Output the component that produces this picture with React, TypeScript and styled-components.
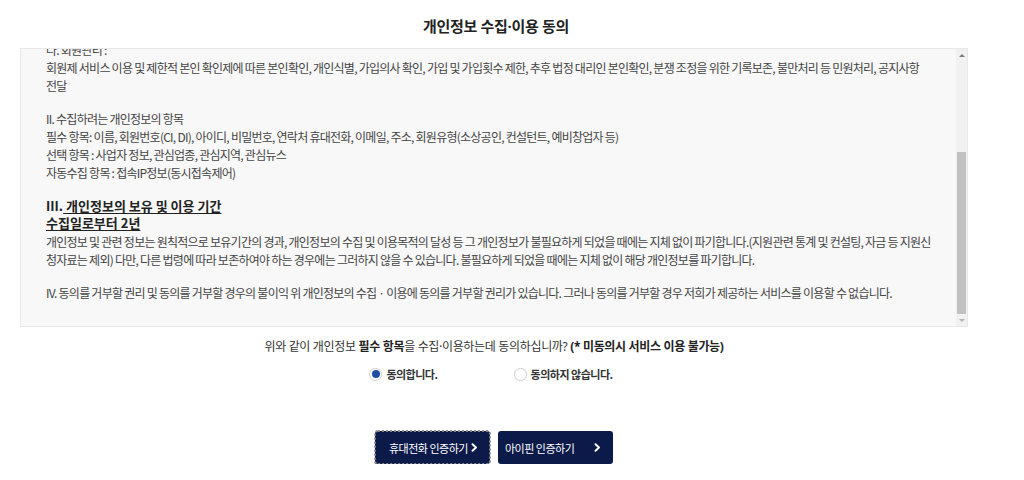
import React, { useLayoutEffect, useRef, useState } from 'react';
import styled, { createGlobalStyle } from 'styled-components';

const GlobalStyle = createGlobalStyle`
  html, body {
    margin: 0;
    padding: 0;
    background: #fff;
  }
  body {
    font-family: "Noto Sans CJK KR", "Noto Sans", sans-serif;
    color: #333;
  }
`;

const Page = styled.div`
  width: 948px;
  margin-left: 20px;
  padding-top: 16px;
`;

const Title = styled.h2`
  margin: 0 0 12px;
  padding-left: 4px;
  text-align: center;
  font-family: "Noto Sans", "Noto Sans CJK KR", sans-serif;
  font-size: 15px;
  line-height: 20px;
  font-weight: 700;
  letter-spacing: -0.3px;
  color: #222;
`;

const TermsBox = styled.div`
  display: flex;
  height: 277px;
  background: #f8f8f8;
  border: 1px solid #e8e8e8;
`;

const TermsScroll = styled.div`
  flex: 1;
  overflow-y: scroll;
  scrollbar-width: none;

  &::-webkit-scrollbar {
    display: none;
  }
`;

const ScrollBar = styled.div`
  width: 11px;
  display: flex;
  flex-direction: column;
  background: #f1f1f1;
`;

const ScrollArrow = styled.div<{ $up?: boolean }>`
  height: 12px;
  display: flex;
  align-items: center;
  justify-content: center;

  &::before {
    content: '';
    width: 0;
    height: 0;
    border-left: 3px solid transparent;
    border-right: 3px solid transparent;
    ${(p) =>
      p.$up
        ? 'border-bottom: 3px solid #7a7a7a;'
        : 'border-top: 3px solid #b4b4b4;'}
  }
`;

const ScrollTrack = styled.div`
  flex: 1;
  position: relative;
`;

const ScrollThumb = styled.div`
  position: absolute;
  left: 1px;
  right: 1px;
  background: #c1c1c1;
`;

const TermsBody = styled.div`
  padding: 28px 25px 24px 25px;
  font-size: 12px;
  line-height: 18px;
  letter-spacing: -0.75px;
  color: #444;
  word-break: break-all;
`;

const Para = styled.p`
  margin: 0 0 15px;

  &:last-child {
    margin-bottom: 0;
  }
`;

const Heading = styled.div`
  font-size: 13px;
  line-height: 17px;
  font-weight: 700;
  letter-spacing: 0;
  color: #222;
  margin-bottom: 2px;
`;

const Under = styled.span`
  text-decoration: underline;
  text-underline-offset: 2px;
`;

const Question = styled.p`
  margin: 11px 0 0;
  text-align: center;
  font-family: "Noto Sans", "Noto Sans CJK KR", sans-serif;
  font-size: 12px;
  line-height: 18px;
  letter-spacing: -0.33px;
  color: #333;

  b {
    color: #222;
  }
`;

const RadioRow = styled.div`
  display: flex;
  justify-content: center;
  gap: 76px;
  margin-top: 9px;
  padding-right: 6px;
`;

const RadioLabel = styled.label`
  display: flex;
  align-items: center;
  gap: 4px;
  cursor: pointer;
  font-size: 11px;
  line-height: 18px;
  font-weight: 700;
  letter-spacing: -0.5px;
  color: #333;
`;

const RadioDot = styled.span<{ $on: boolean }>`
  width: 13px;
  height: 13px;
  border-radius: 50%;
  box-sizing: border-box;
  border: 1px solid #d4d4d4;
  background: #fff;
  box-shadow: 0 0 1px rgba(0, 0, 0, 0.1);
  display: flex;
  align-items: center;
  justify-content: center;

  &::after {
    content: '';
    width: 8px;
    height: 8px;
    border-radius: 50%;
    background: #1d4ea6;
    display: ${(p) => (p.$on ? 'block' : 'none')};
  }
`;

const HiddenInput = styled.input`
  display: none;
`;

const ButtonRow = styled.div`
  display: flex;
  justify-content: center;
  gap: 8px;
  margin-top: 48px;
`;

const AuthButton = styled.button<{ $focused?: boolean; $padLeft: number }>`
  width: 115px;
  height: 33px;
  display: flex;
  align-items: center;
  justify-content: space-between;
  padding: 0 12px 0 ${(p) => p.$padLeft}px;
  border: none;
  border-radius: 3px;
  background: #0c1a4a;
  color: #fff;
  font-family: "Noto Sans CJK KR", sans-serif;
  font-size: 11px;
  letter-spacing: -0.5px;
  white-space: nowrap;
  cursor: pointer;
  outline: ${(p) => (p.$focused ? '2px dotted #8c8c8c' : 'none')};
  outline-offset: -1px;

  svg {
    flex-shrink: 0;
  }
`;

const Chevron = () => (
  <svg width="7" height="9" viewBox="0 0 7 9" fill="none">
    <path d="M1.5 1.2 L5 4.5 L1.5 7.8" stroke="#fff" strokeWidth="1.9" strokeLinecap="round" strokeLinejoin="round" />
  </svg>
);

export default function App() {
  const boxRef = useRef<HTMLDivElement>(null);
  const trackRef = useRef<HTMLDivElement>(null);
  const [agree, setAgree] = useState(true);
  const [thumb, setThumb] = useState({ top: 0, height: 0 });

  useLayoutEffect(() => {
    const box = boxRef.current;
    const track = trackRef.current;
    if (!box || !track) return;
    box.scrollTop = box.scrollHeight;
    const trackH = track.clientHeight;
    setThumb({
      top: (trackH * box.scrollTop) / box.scrollHeight,
      height: (trackH * box.clientHeight) / box.scrollHeight,
    });
  }, []);

  return (
    <>
      <GlobalStyle />
      <Page>
        <Title>개인정보 수집·이용 동의</Title>
        <TermsBox>
          <TermsScroll ref={boxRef}>
            <TermsBody>
              <Para>
                소상공인시장진흥공단은 「개인정보 보호법」 제15조 및 제22조에 따라 아래와 같이 개인정보를 수집·이용하고자 합니다.
              </Para>
              <Para>
                I. 개인정보의 수집·이용 목적
                <br />
                가. 서비스 제공 :
                <br />
                소상공인 지원사업 안내 및 신청·접수, 교육 및 컨설팅 신청 처리, 정책자금 관련 정보 제공
                <br />
                맞춤형 정책정보 제공, 설문조사 및 이벤트 안내
              </Para>
              <Para>
                나. 회원관리 :
                <br />
                회원제 서비스 이용 및 제한적 본인 확인제에 따른 본인확인, 개인식별, 가입의사 확인, 가입 및 가입횟수 제한, 추후 법정 대리인 본인확인, 분쟁 조정을 위한 기록보존, 불만처리 등 민원처리, 공지사항 전달
              </Para>
              <Para>
                II. 수집하려는 개인정보의 항목
                <br />
                필수 항목: 이름, 회원번호(CI, DI), 아이디, 비밀번호, 연락처 휴대전화, 이메일, 주소, 회원유형(소상공인, 컨설턴트, 예비창업자 등)
                <br />
                선택 항목 : 사업자 정보, 관심업종, 관심지역, 관심뉴스
                <br />
                자동수집 항목 : 접속IP정보(동시접속제어)
              </Para>
              <Para>
                <Heading>
                  III.<Under> 개인정보의 보유 및 이용 기간</Under>
                  <br />
                  <Under>수집일로부터 2년</Under>
                </Heading>
                개인정보 및 관련 정보는 원칙적으로 보유기간의 경과, 개인정보의 수집 및 이용목적의 달성 등 그 개인정보가 불필요하게 되었을 때에는 지체 없이 파기합니다.(지원관련 통계 및 컨설팅, 자금 등 지원신청자료는 제외) 다만, 다른 법령에 따라 보존하여야 하는 경우에는 그러하지 않을 수 있습니다. 불필요하게 되었을 때에는 지체 없이 해당 개인정보를 파기합니다.
              </Para>
              <Para>
                IV. 동의를 거부할 권리 및 동의를 거부할 경우의 불이익 위 개인정보의 수집 · 이용에 동의를 거부할 권리가 있습니다. 그러나 동의를 거부할 경우 저희가 제공하는 서비스를 이용할 수 없습니다.
              </Para>
            </TermsBody>
          </TermsScroll>
          <ScrollBar>
            <ScrollArrow $up />
            <ScrollTrack ref={trackRef}>
              <ScrollThumb style={{ top: thumb.top, height: thumb.height }} />
            </ScrollTrack>
            <ScrollArrow />
          </ScrollBar>
        </TermsBox>

        <Question>
          위와 같이 개인정보 <b>필수 항목</b>을 수집·이용하는데 동의하십니까? <b>(* 미동의시 서비스 이용 불가능)</b>
        </Question>

        <RadioRow>
          <RadioLabel>
            <HiddenInput type="radio" name="agree" checked={agree} onChange={() => setAgree(true)} />
            <RadioDot $on={agree} />
            동의합니다.
          </RadioLabel>
          <RadioLabel>
            <HiddenInput type="radio" name="agree" checked={!agree} onChange={() => setAgree(false)} />
            <RadioDot $on={!agree} />
            동의하지 않습니다.
          </RadioLabel>
        </RadioRow>

        <ButtonRow>
          <AuthButton $focused $padLeft={14}>
            휴대전화 인증하기
            <Chevron />
          </AuthButton>
          <AuthButton $padLeft={7}>
            아이핀 인증하기
            <Chevron />
          </AuthButton>
        </ButtonRow>
      </Page>
    </>
  );
}
